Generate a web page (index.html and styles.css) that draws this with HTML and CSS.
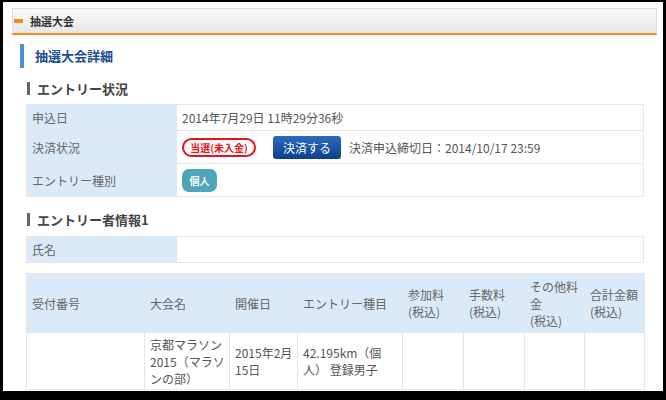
FILE: index.html
```html
<!DOCTYPE html>
<html lang="ja">
<head>
<meta charset="utf-8">
<link rel="stylesheet" href="styles.css">
</head>
<body>
<div class="frame">
  <div class="panel-head"><span class="mark"></span><span class="panel-title">抽選大会</span></div>
  <div class="content">
    <h2 class="page-title">抽選大会詳細</h2>
    <h3 class="sec-title">エントリー状況</h3>
    <table class="info">
      <tr class="r1"><th>申込日</th><td>2014年7月29日 11時29分36秒</td></tr>
      <tr class="r2"><th>決済状況</th><td><div class="pay"><span class="status">当選(未入金)</span><span class="btn">決済する</span><span class="deadline">決済申込締切日：2014/10/17 23:59</span></div></td></tr>
      <tr class="r3"><th>エントリー種別</th><td><span class="kind">個人</span></td></tr>
    </table>
    <h3 class="sec-title sec2">エントリー者情報1</h3>
    <table class="info name">
      <tr><th>氏名</th><td></td></tr>
    </table>
    <table class="list">
      <colgroup>
        <col class="c1"><col class="c2"><col class="c3"><col class="c4"><col class="c5"><col class="c6"><col class="c7"><col class="c8">
      </colgroup>
      <tr class="head">
        <th>受付番号</th><th>大会名</th><th>開催日</th><th>エントリー種目</th><th>参加料<br>(税込)</th><th>手数料<br>(税込)</th><th>その他料金<br>(税込)</th><th>合計金額<br>(税込)</th>
      </tr>
      <tr class="data">
        <td></td><td>京都マラソン2015（マラソンの部）</td><td>2015年2月15日</td><td>42.195km（個人） 登録男子</td><td></td><td></td><td></td><td></td>
      </tr>
    </table>
  </div>
</div>
</body>
</html>
```

FILE: styles.css
```css
html, body {
  margin: 0;
  padding: 0;
  background: #000;
}
body {
  font-family: "Noto Sans CJK JP", "Noto Sans", sans-serif;
  font-size: 12px;
  color: #555;
}
.frame {
  background: #fff;
  margin: 2px 3px 0 3px;
  height: 389px;
  padding: 6px 6px 0 9px;
  box-sizing: border-box;
  overflow: hidden;
}
.panel-head {
  height: 27px;
  box-sizing: border-box;
  border: 1px solid #dedede;
  border-bottom: 2px solid #f08a1c;
  background: linear-gradient(#fafafa, #e6e6e6);
  display: flex;
  align-items: center;
  padding-left: 1px;
}
.mark {
  width: 9px;
  height: 4px;
  background: #f08a1c;
  margin-right: 7px;
}
.panel-title {
  font-size: 11px;
  font-weight: bold;
  color: #333;
}
.content {
  padding: 0 13px 0 14px;
}
.page-title {
  margin: 9px 0 0 -6px;
  height: 24px;
  border-left: 4px solid #4a8fd8;
  padding-left: 11px;
  font-size: 13px;
  font-weight: bold;
  color: #1c4f91;
  line-height: 24px;
}
.sec-title {
  margin: 14px 0 0 1px;
  border-left: 3px solid #666;
  padding-left: 7px;
  height: 13px;
  line-height: 13px;
  font-size: 13px;
  font-weight: bold;
  color: #444;
}
.sec2 {
  margin-top: 16px;
}
table {
  border-collapse: collapse;
  width: 100%;
}
.info {
  margin-top: 9px;
}
.info th, .info td {
  border: 1px solid #e6e6e6;
  text-align: left;
  font-weight: normal;
  padding: 0 5px;
}
.info th {
  width: 139px;
  background: #dbeaf8;
  color: #666;
}
.info td {
  color: #555;
}
.r1 { height: 26px; }
.r2 { height: 33px; }
.r3 { height: 33px; }
.name { margin-top: 10px; }
.name tr { height: 26px; }
.pay {
  display: flex;
  align-items: center;
}
.status {
  border: 2px solid #e8141c;
  border-radius: 10px;
  color: #e8141c;
  font-size: 10px;
  font-weight: bold;
  height: 19px;
  width: 74px;
  box-sizing: border-box;
  display: flex;
  align-items: center;
  justify-content: center;
}
.btn {
  margin-left: 17px;
  width: 68px;
  height: 23px;
  border-radius: 3px;
  background: linear-gradient(#2a6cc0, #0d3f88);
  color: #fff;
  font-size: 12px;
  display: flex;
  align-items: center;
  justify-content: center;
}
.deadline {
  margin-left: 8px;
}
.kind {
  display: inline-flex;
  align-items: center;
  justify-content: center;
  width: 35px;
  height: 23px;
  border-radius: 7px;
  background: #4ea5b8;
  color: #fff;
  font-size: 10px;
  font-weight: bold;
  vertical-align: middle;
}
.list {
  margin-top: 10px;
  table-layout: fixed;
}
.list th, .list td {
  border: 1px solid #e6e6e6;
  text-align: left;
  font-weight: normal;
  padding: 0 4px 0 5px;
  line-height: 17px;
  vertical-align: middle;
}
.list th {
  background: #dbeaf8;
  color: #666;
}
.list .head { height: 59px; }
.list .data { height: 57px; }
.c1 { width: 118px; }
.c2 { width: 85px; }
.c3 { width: 68px; }
.c4 { width: 105px; }
.c5 { width: 61px; }
.c6 { width: 61px; }
.c7 { width: 60px; }
.c8 { width: 60px; }
```
